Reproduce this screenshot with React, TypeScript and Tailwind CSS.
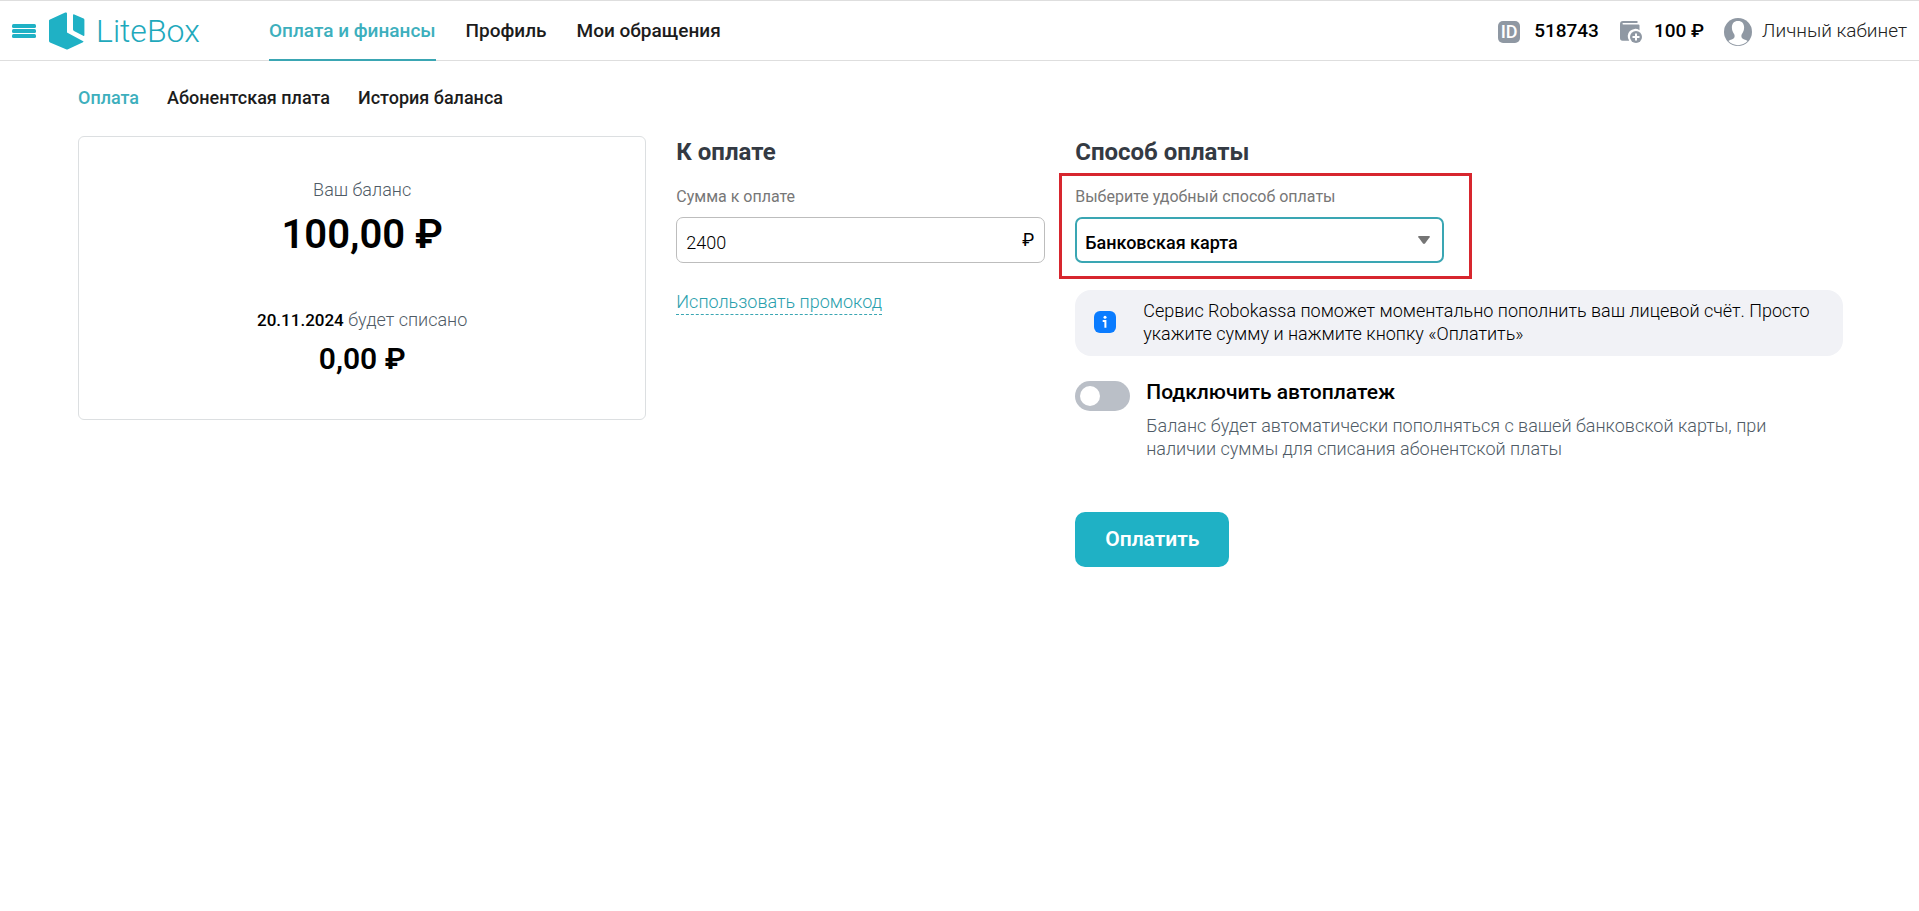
import { useState } from "react";

const sections = ["Оплата и финансы", "Профиль", "Мои обращения"];
const tabs = ["Оплата", "Абонентская плата", "История баланса"];

function MenuIcon() {
  return (
    <svg width="24" height="16" viewBox="0 0 24 16" fill="#1fb1c5">
      <rect y="1" width="24" height="4" rx="1.5" />
      <rect y="6" width="24" height="4" rx="1.5" />
      <rect y="11" width="24" height="4" rx="1.5" />
    </svg>
  );
}

function LogoMark() {
  return (
    <svg width="36" height="38" viewBox="0 0 36 38" fill="#1fb1c5">
      <path d="M1 7.4 16.2.6Q18 0 18 1.6V20.6L34.2 29.2Q35 29.8 34 30.3L19 37.3Q18 37.7 17 37.3L1 30.4Q0 29.9 0 29V8.6Q0 7.8 1 7.4Z" />
      <path d="M24 3.4Q24 2 25.3 2.5L34.6 6.6Q35.4 7 35.4 8V23Q35.4 24.4 34.2 23.8L25 19Q24 18.5 24 17.6Z" />
    </svg>
  );
}

function WalletIcon() {
  return (
    <svg width="24" height="24" viewBox="0 0 24 24">
      <path
        fill="#8f98a3"
        d="M4 1H18.5V3H4.2a.7.7 0 0 0 0 1.5H19.5Q20.5 4.5 20.5 5.5V10.3A7.4 7.4 0 0 0 10.2 20.7H3.5Q1 20.7 1 18V4Q1 1 4 1Z"
      />
      <circle cx="17" cy="17" r="6" fill="#8f98a3" />
      <path d="M17 13.5V20.5M13.5 17H20.5" stroke="#fff" strokeWidth="2" />
    </svg>
  );
}

function UserIcon() {
  return (
    <svg width="28" height="28" viewBox="0 0 28 28">
      <circle cx="14" cy="14" r="14" fill="#8f98a3" />
      <path
        fill="#fff"
        d="M14 3C18.3 3 20.3 6 20.1 10C20 13 18.8 14.6 17.8 16.2C17.3 17.1 17.2 18.6 17.8 19.8C18.6 21.2 21.6 21.7 23.6 22.9A13 13 0 0 1 4.4 22.9C6.4 21.7 9.4 21.2 10.2 19.8C10.8 18.6 10.7 17.1 10.2 16.2C9.2 14.6 8 13 7.9 10C7.7 6 9.7 3 14 3Z"
      />
    </svg>
  );
}

function InfoIcon() {
  return (
    <svg width="22" height="22" viewBox="0 0 22 22" className="shrink-0">
      <rect width="22" height="22" rx="6" fill="#0a7cff" />
      <circle cx="11" cy="6.3" r="1.5" fill="#fff" />
      <path d="M8.7 10H11.4V16.8" fill="none" stroke="#fff" strokeWidth="2" />
    </svg>
  );
}

function Header() {
  return (
    <header className="flex h-[61px] items-stretch border-y border-[#dedede] pl-3 pr-3">
      <div className="flex w-[257px] items-center gap-[13px]">
        <button type="button" aria-label="Меню">
          <MenuIcon />
        </button>
        <a href="#" className="flex items-center gap-[11px]">
          <LogoMark />
          <span className="text-[32px] leading-[38px] font-light text-[#1fa9bc]">LiteBox</span>
        </a>
      </div>

      <nav className="-mb-px flex gap-[30px] text-[19px] font-medium">
        {sections.map((name, i) => (
          <a
            key={name}
            href="#"
            className={
              i === 0
                ? "flex items-center border-b-2 border-[#3aa6b3] pt-0.5 text-[#3dafbd]"
                : "flex items-center border-b-2 border-transparent pt-0.5 text-[#1c1c1c]"
            }
          >
            {name}
          </a>
        ))}
      </nav>

      <div className="ml-auto flex items-center pt-0.5 text-[19px] font-medium">
        <span className="flex size-[22px] items-center justify-center rounded-[5px] bg-[#8f98a3] text-[18px] text-white">
          ID
        </span>
        <span className="ml-[14px]">518743</span>
        <a href="#" className="ml-5 flex items-center gap-[11px]">
          <WalletIcon />
          <span>100 ₽</span>
        </a>
        <a href="#" className="ml-5 flex items-center gap-[10px] font-light text-[#222]">
          <UserIcon />
          <span>Личный кабинет</span>
        </a>
      </div>
    </header>
  );
}

function BalanceCard() {
  return (
    <section className="col-span-3 self-start rounded-[6px] border border-[#dcdfe1] pt-10 pb-[38px] text-center">
      <p className="text-[18px] leading-[26px] font-light text-[#4f5b66]">Ваш баланс</p>
      <p className="mt-1 text-[40px] leading-[56px] font-semibold">100,00 ₽</p>
      <p className="mt-[44px] text-[18px] leading-[26px] font-light text-[#4f5b66]">
        <span className="text-[17px] font-medium text-black">20.11.2024</span> будет списано
      </p>
      <p className="mt-1 text-[30px] leading-[44px] font-semibold">0,00 ₽</p>
    </section>
  );
}

function AmountForm() {
  const [amount, setAmount] = useState("2400");

  return (
    <section className="col-span-2">
      <h2 className="text-[24px] leading-[32px] font-bold text-[#343a43]">К оплате</h2>
      <label htmlFor="amount" className="mt-[17px] block text-[16px] leading-[24px] text-[#777]">
        Сумма к оплате
      </label>
      <div className="mt-2 flex h-[46px] items-center rounded-[7px] border border-[#bdbdbd] pr-[10px]">
        <input
          id="amount"
          value={amount}
          onChange={(e) => setAmount(e.target.value)}
          className="min-w-0 flex-1 bg-transparent pt-1 pl-[9px] text-[18px] font-light outline-none"
        />
        <span className="text-[18px] leading-[24px]">₽</span>
      </div>
      <a
        href="#"
        className="mt-[27px] inline-block border-b border-dashed border-[#3aa6b3] text-[18px] leading-[24px] font-light text-[#2a9fad]"
      >
        Использовать промокод
      </a>
    </section>
  );
}

function PaymentMethod() {
  const [method, setMethod] = useState("card");
  const [auto, setAuto] = useState(false);

  return (
    <section className="col-span-4">
      <h2 className="text-[24px] leading-[32px] font-bold text-[#343a43]">Способ оплаты</h2>

      <div className="relative mt-[17px] w-[calc(50%-15px)]">
        <div className="pointer-events-none absolute -top-3 -right-7 -bottom-4 -left-4 border-3 border-[#d7262e]" />
        <label htmlFor="method" className="block text-[16px] leading-[24px] text-[#777]">
          Выберите удобный способ оплаты
        </label>
        <div className="mt-2 grid items-center">
          <select
            id="method"
            value={method}
            onChange={(e) => setMethod(e.target.value)}
            className="col-start-1 row-start-1 h-[46px] appearance-none rounded-[7px] border-2 border-[#3aa6b3] bg-white pt-1 pl-2 text-[18px] font-medium outline-none"
          >
            <option value="card">Банковская карта</option>
          </select>
          <svg width="12" height="8" viewBox="0 0 12 8" className="pointer-events-none col-start-1 row-start-1 mr-[14px] justify-self-end">
            <path d="M.5 0H11.5Q12 .5 11.6 1.2L7 7.5Q6 8.3 5 7.5L.4 1.2Q0 .5.5 0Z" fill="#757575" />
          </svg>
        </div>
      </div>

      <div className="mt-[27px] flex items-center gap-[27px] rounded-[16px] bg-[#f1f2f6] pt-[9px] pr-6 pb-[11px] pl-[19px]">
        <InfoIcon />
        <p className="text-[18px] leading-[23px] font-light text-black">
          Сервис Robokassa поможет моментально пополнить ваш лицевой счёт. Просто укажите сумму и нажмите кнопку
          «Оплатить»
        </p>
      </div>

      <div className="mt-[22px] flex gap-4">
        <input
          id="autopay"
          type="checkbox"
          checked={auto}
          onChange={(e) => setAuto(e.target.checked)}
          className="mt-[3px] h-[30px] w-[55px] shrink-0 appearance-none rounded-full bg-[#babfc7] p-[5px] before:block before:size-5 before:rounded-full before:bg-white checked:bg-[#1fb1c5] checked:before:ml-[25px]"
        />
        <div>
          <label htmlFor="autopay" className="block text-[21px] leading-[28px] font-medium">
            Подключить автоплатеж
          </label>
          <p className="mt-2 max-w-[640px] text-[18px] leading-[23px] font-light text-[#4f5b66]">
            Баланс будет автоматически пополняться с вашей банковской карты, при наличии суммы для списания
            абонентской платы
          </p>
        </div>
      </div>

      <button type="button" className="mt-[52px] h-[55px] rounded-[10px] bg-[#1fb1c5] px-[30px] text-[21px] font-semibold text-white">
        Оплатить
      </button>
    </section>
  );
}

export default function App() {
  return (
    <div className="bg-white font-[Roboto,sans-serif] text-black">
      <Header />
      <main className="pr-[76px] pl-[78px]">
        <nav className="flex gap-7 pt-[25px] text-[18px] leading-[24px] font-medium">
          {tabs.map((tab, i) => (
            <a key={tab} href="#" className={i === 0 ? "text-[#3dafbd]" : "text-[#1c1c1c]"}>
              {tab}
            </a>
          ))}
        </nav>
        <div className="mt-[26px] grid grid-cols-9 gap-[30px]">
          <BalanceCard />
          <AmountForm />
          <PaymentMethod />
        </div>
      </main>
    </div>
  );
}
